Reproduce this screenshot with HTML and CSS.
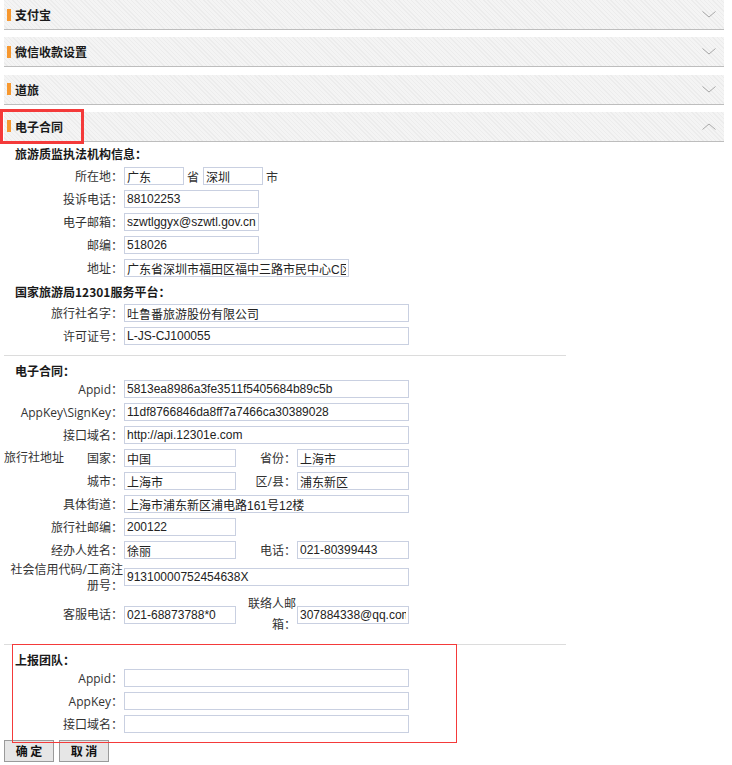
FILE: index.html
```html
<!DOCTYPE html>
<html lang="zh-CN">
<head>
<meta charset="utf-8">
<title>电子合同</title>
<link rel="stylesheet" href="styles.css">
</head>
<body>
<div class="page">
  <div class="acc-head">
    <span class="bar"></span><span class="acc-title">支付宝</span>
    <svg class="chev" width="14" height="7" viewBox="0 0 14 7"><polyline points="0.5,0.5 7,6 13.5,0.5" fill="none" stroke="#a8a8a8" stroke-width="1"/></svg>
  </div>
  <div class="acc-head">
    <span class="bar"></span><span class="acc-title">微信收款设置</span>
    <svg class="chev" width="14" height="7" viewBox="0 0 14 7"><polyline points="0.5,0.5 7,6 13.5,0.5" fill="none" stroke="#a8a8a8" stroke-width="1"/></svg>
  </div>
  <div class="acc-head">
    <span class="bar"></span><span class="acc-title">道旅</span>
    <svg class="chev" width="14" height="7" viewBox="0 0 14 7"><polyline points="0.5,0.5 7,6 13.5,0.5" fill="none" stroke="#a8a8a8" stroke-width="1"/></svg>
  </div>
  <div class="acc-head open">
    <span class="bar"></span><span class="acc-title">电子合同</span>
    <svg class="chev" width="14" height="7" viewBox="0 0 14 7"><polyline points="0.5,6.5 7,1 13.5,6.5" fill="none" stroke="#a8a8a8" stroke-width="1"/></svg>
  </div>

  <div class="acc-body">
    <div class="sec-title t1">旅游质监执法机构信息<span class="colon">：</span></div>
    <div class="row"><span class="lbl">所在地<span class="colon">：</span></span><input class="inp w60" value="广东"><span class="unit u1">省</span><input class="inp w60" value="深圳"><span class="unit u2">市</span></div>
    <div class="row"><span class="lbl">投诉电话<span class="colon">：</span></span><input class="inp w135" value="88102253"></div>
    <div class="row"><span class="lbl">电子邮箱<span class="colon">：</span></span><input class="inp w135" value="szwtlggyx@szwtl.gov.cn"></div>
    <div class="row"><span class="lbl">邮编<span class="colon">：</span></span><input class="inp w135" value="518026"></div>
    <div class="row"><span class="lbl">地址<span class="colon">：</span></span><input class="inp w225" value="广东省深圳市福田区福中三路市民中心C区"></div>

    <div class="sec-title t2">国家旅游局12301服务平台<span class="colon">：</span></div>
    <div class="row"><span class="lbl">旅行社名字<span class="colon">：</span></span><input class="inp w285" value="吐鲁番旅游股份有限公司"></div>
    <div class="row"><span class="lbl">许可证号<span class="colon">：</span></span><input class="inp w285" value="L-JS-CJ100055"></div>

    <div class="divider d1"></div>

    <div class="sec-title t3">电子合同<span class="colon">：</span></div>
    <div class="row"><span class="lbl">Appid<span class="colon">：</span></span><input class="inp w285" value="5813ea8986a3fe3511f5405684b89c5b"></div>
    <div class="row"><span class="lbl">AppKey\SignKey<span class="colon">：</span></span><input class="inp w285" value="11df8766846da8ff7a7466ca30389028"></div>
    <div class="row"><span class="lbl">接口域名<span class="colon">：</span></span><input class="inp w285" value="http://api.12301e.com"></div>
    <div class="row"><span class="lbl lbl-split"><span>旅行社地址</span><span>国家<span class="colon">：</span></span></span><input class="inp w112" value="中国"><span class="lbl2">省份<span class="colon">：</span></span><input class="inp w112" value="上海市"></div>
    <div class="row"><span class="lbl">城市<span class="colon">：</span></span><input class="inp w112" value="上海市"><span class="lbl2">区/县<span class="colon">：</span></span><input class="inp w112" value="浦东新区"></div>
    <div class="row"><span class="lbl">具体街道<span class="colon">：</span></span><input class="inp w285" value="上海市浦东新区浦电路161号12楼"></div>
    <div class="row"><span class="lbl">旅行社邮编<span class="colon">：</span></span><input class="inp w112" value="200122"></div>
    <div class="row"><span class="lbl">经办人姓名<span class="colon">：</span></span><input class="inp w112" value="徐丽"><span class="lbl2">电话<span class="colon">：</span></span><input class="inp w112" value="021-80399443"></div>
    <div class="row row-t1"><span class="lbl wrap1">社会信用代码/工商注册号<span class="colon">：</span></span><input class="inp w285" value="91310000752454638X"></div>
    <div class="row row-t2"><span class="lbl">客服电话<span class="colon">：</span></span><input class="inp w112" value="021-68873788*0"><span class="lbl2 wrap2">联络人邮箱<span class="colon">：</span></span><input class="inp w112" value="307884338@qq.com"></div>

    <div class="divider d2"></div>

    <div class="sec-title t4">上报团队<span class="colon">：</span></div>
    <div class="row"><span class="lbl">Appid<span class="colon">：</span></span><input class="inp w285" value=""></div>
    <div class="row"><span class="lbl">AppKey<span class="colon">：</span></span><input class="inp w285" value=""></div>
    <div class="row"><span class="lbl">接口域名<span class="colon">：</span></span><input class="inp w285" value=""></div>

    <div class="actions">
      <button class="btn" type="button">确 定</button>
      <button class="btn" type="button">取 消</button>
    </div>
  </div>
</div>
<div class="red-box rb1"></div>
<div class="red-box rb2"></div>
</body>
</html>
```
FILE: styles.css
```css
html, body {
  margin: 0;
  padding: 0;
  background: #ffffff;
}
body {
  position: relative;
  font-family: "Open Sans", "Noto Sans CJK SC", sans-serif;
  font-size: 12px;
  color: #333333;
}
.page {
  margin-left: 4px;
  width: 720px;
}
.acc-head {
  height: 29px;
  border-bottom: 1px solid #bdbdbd;
  margin-bottom: 7.3px;
  display: flex;
  align-items: center;
  background-color: #f1f1f1;
  background-image: repeating-linear-gradient(45deg, #f4f4f4 0px, #f4f4f4 2px, #ececec 2px, #ececec 3px);
}
.acc-head.open {
  margin-bottom: 0;
}
.bar {
  width: 4px;
  height: 12px;
  margin-left: 3px;
  margin-right: 4px;
  background: #f7982f;
  flex-shrink: 0;
}
.acc-title {
  font-family: "Noto Sans CJK SC", sans-serif;
  font-weight: bold;
  font-size: 12px;
  color: #1a1a1a;
}
.chev {
  margin-left: auto;
  margin-right: 8px;
  display: block;
}
.acc-body {
  padding-top: 1px;
}
.colon {
  font-family: "Noto Sans CJK JP", "Noto Sans CJK SC", sans-serif;
}
.sec-title {
  font-family: "Noto Sans CJK SC", sans-serif;
  font-weight: bold;
  font-size: 12px;
  line-height: 14px;
  height: 14px;
  color: #1a1a1a;
  padding-left: 11px;
}
.t1 { margin-top: 4px; margin-bottom: 4px; }
.t2 { margin-top: 5px; margin-bottom: 3px; }
.t3 { margin-top: 8px; margin-bottom: 0; }
.t4 { margin-top: 8px; margin-bottom: 0; }
.row {
  display: flex;
  align-items: center;
  height: 23px;
}
.row-t1 { height: 31px; }
.row-t2 { height: 44px; }
.lbl {
  width: 119px;
  flex-shrink: 0;
  margin-right: 1px;
  text-align: right;
  line-height: 16px;
  color: #333333;
}
.lbl-split {
  display: flex;
  justify-content: space-between;
}
.lbl2 {
  width: 50px;
  padding-left: 10px;
  flex-shrink: 0;
  margin-right: 1px;
  text-align: right;
  line-height: 16px;
}
.wrap1 { line-height: 15px; }
.wrap2 { line-height: 20px; }
.inp {
  box-sizing: border-box;
  height: 18px;
  margin: 0;
  padding: 0 2px;
  border: 1px solid #c9d0e1;
  background: #ffffff;
  font-family: "Liberation Sans", "Noto Sans CJK SC", sans-serif;
  font-size: 12px;
  color: #222222;
  outline: none;
  flex-shrink: 0;
}
.w60 { width: 60px; }
.w112 { width: 112px; }
.w135 { width: 135px; }
.w225 { width: 225px; }
.w285 { width: 285px; }
.unit {
  font-family: "Noto Sans CJK SC", sans-serif;
  color: #333333;
}
.u1 { margin: 0 4px 0 3px; }
.u2 { margin-left: 3px; }
.divider {
  width: 562px;
  height: 1px;
  background: #dcdcdc;
}
.d1 { margin-top: 7px; }
.d2 { margin-top: 7px; }
.actions {
  margin-top: 4px;
  display: flex;
  gap: 5px;
}
.btn {
  box-sizing: border-box;
  width: 50px;
  height: 22px;
  margin: 0;
  padding: 0;
  border: 1px solid #9a9a9a;
  background: #e6e6e6;
  font-family: "Noto Sans CJK SC", sans-serif;
  font-weight: bold;
  font-size: 12px;
  color: #111111;
}
.red-box {
  position: absolute;
  box-sizing: border-box;
  pointer-events: none;
}
.rb1 {
  left: 0;
  top: 109px;
  width: 84px;
  height: 35px;
  border: 3px solid #f43a3a;
}
.rb2 {
  left: 12px;
  top: 644px;
  width: 445px;
  height: 99px;
  border: 1px solid #f43a3a;
}
```
